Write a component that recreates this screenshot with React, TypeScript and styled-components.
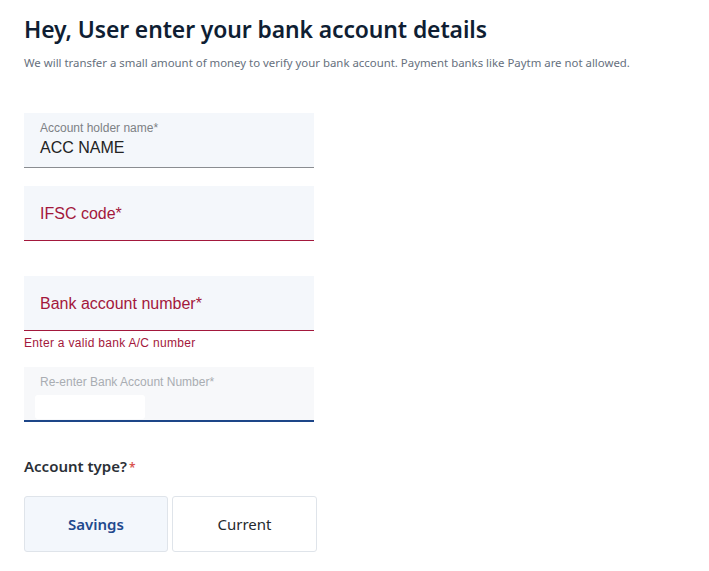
import React from "react";
import styled, { createGlobalStyle } from "styled-components";

const Global = createGlobalStyle`
  html, body { margin: 0; padding: 0; background: #ffffff; }
  * { box-sizing: border-box; }
`;

const Page = styled.div`
  padding: 14px 24px 20px 24px;
  font-family: "Noto Sans", "Open Sans", sans-serif;
`;

const Title = styled.h1`
  margin: 0;
  font-size: 22.9px;
  line-height: 32px;
  font-weight: 600;
  color: #0f1e33;
  letter-spacing: -0.1px;
`;

const Subtitle = styled.p`
  margin: 9px 0 0 0;
  font-size: 11.4px;
  line-height: 16px;
  color: #66707d;
`;

const Form = styled.div`
  margin-top: 42px;
  width: 290px;
  display: flex;
  flex-direction: column;
`;

const Field = styled.div<{ $tone: "filled" | "error" | "focus"; $gap: number }>`
  position: relative;
  height: 55px;
  margin-top: ${(p) => p.$gap}px;
  background: ${(p) => (p.$tone === "focus" ? "#f7f8fa" : "#f4f7fb")};
  border-bottom: ${(p) =>
    p.$tone === "error"
      ? "1px solid #a3183c"
      : p.$tone === "focus"
      ? "2px solid #1d4688"
      : "1px solid #8a8d91"};
  padding: 8px 16px 0 16px;
  display: flex;
  flex-direction: column;
  font-family: "Liberation Sans", Arial, sans-serif;
`;

const SmallLabel = styled.span<{ $muted?: boolean }>`
  font-size: 12px;
  line-height: 14px;
  color: ${(p) => (p.$muted ? "#a9adb2" : "#7d8185")};
`;

const Value = styled.span`
  font-size: 16px;
  line-height: 22px;
  color: #222;
  margin-top: 2px;
`;

const BigLabel = styled.span`
  font-size: 16px;
  line-height: 20px;
  color: #a3183c;
  margin-top: 10px;
`;

const Masked = styled.div`
  margin-top: 6px;
  margin-left: -5px;
  width: 110px;
  height: 24px;
  background: #ffffff;
  border-radius: 3px;
`;

const ErrorText = styled.div`
  font-family: "Liberation Sans", Arial, sans-serif;
  font-size: 12px;
  line-height: 14px;
  letter-spacing: 0.3px;
  color: #a3183c;
  margin-top: 5px;
`;

const SectionTitle = styled.h2`
  margin: 34px 0 0 0;
  font-size: 15px;
  line-height: 20px;
  font-weight: 600;
  color: #2a2f36;
`;

const Star = styled.span`
  color: #d9534f;
  font-size: 12px;
  margin-left: 2px;
`;

const Choices = styled.div`
  margin-top: 18px;
  display: flex;
  gap: 4px;
`;

const Choice = styled.button<{ $active?: boolean }>`
  width: ${(p) => (p.$active ? 144 : 145)}px;
  height: 56px;
  border: 1px solid #dfe4ea;
  border-radius: 3px;
  background: ${(p) => (p.$active ? "#f3f7fc" : "#ffffff")};
  color: ${(p) => (p.$active ? "#1f4a8e" : "#25292e")};
  font-family: "Noto Sans", "Open Sans", sans-serif;
  font-size: 15px;
  font-weight: ${(p) => (p.$active ? 600 : 400)};
  padding: 0;
  cursor: pointer;
`;

export default function App() {
  return (
    <>
      <Global />
      <Page>
        <Title>Hey, User enter your bank account details</Title>
        <Subtitle>
          We will transfer a small amount of money to verify your bank account. Payment banks like Paytm are not allowed.
        </Subtitle>
        <Form>
          <Field $tone="filled" $gap={0}>
            <SmallLabel>Account holder name*</SmallLabel>
            <Value>ACC NAME</Value>
          </Field>
          <Field $tone="error" $gap={18}>
            <BigLabel>IFSC code*</BigLabel>
          </Field>
          <Field $tone="error" $gap={35}>
            <BigLabel>Bank account number*</BigLabel>
          </Field>
          <ErrorText>Enter a valid bank A/C number</ErrorText>
          <Field $tone="focus" $gap={17}>
            <SmallLabel $muted>Re-enter Bank Account Number*</SmallLabel>
            <Masked />
          </Field>
        </Form>
        <SectionTitle>
          Account type?<Star>*</Star>
        </SectionTitle>
        <Choices>
          <Choice $active>Savings</Choice>
          <Choice>Current</Choice>
        </Choices>
      </Page>
    </>
  );
}
